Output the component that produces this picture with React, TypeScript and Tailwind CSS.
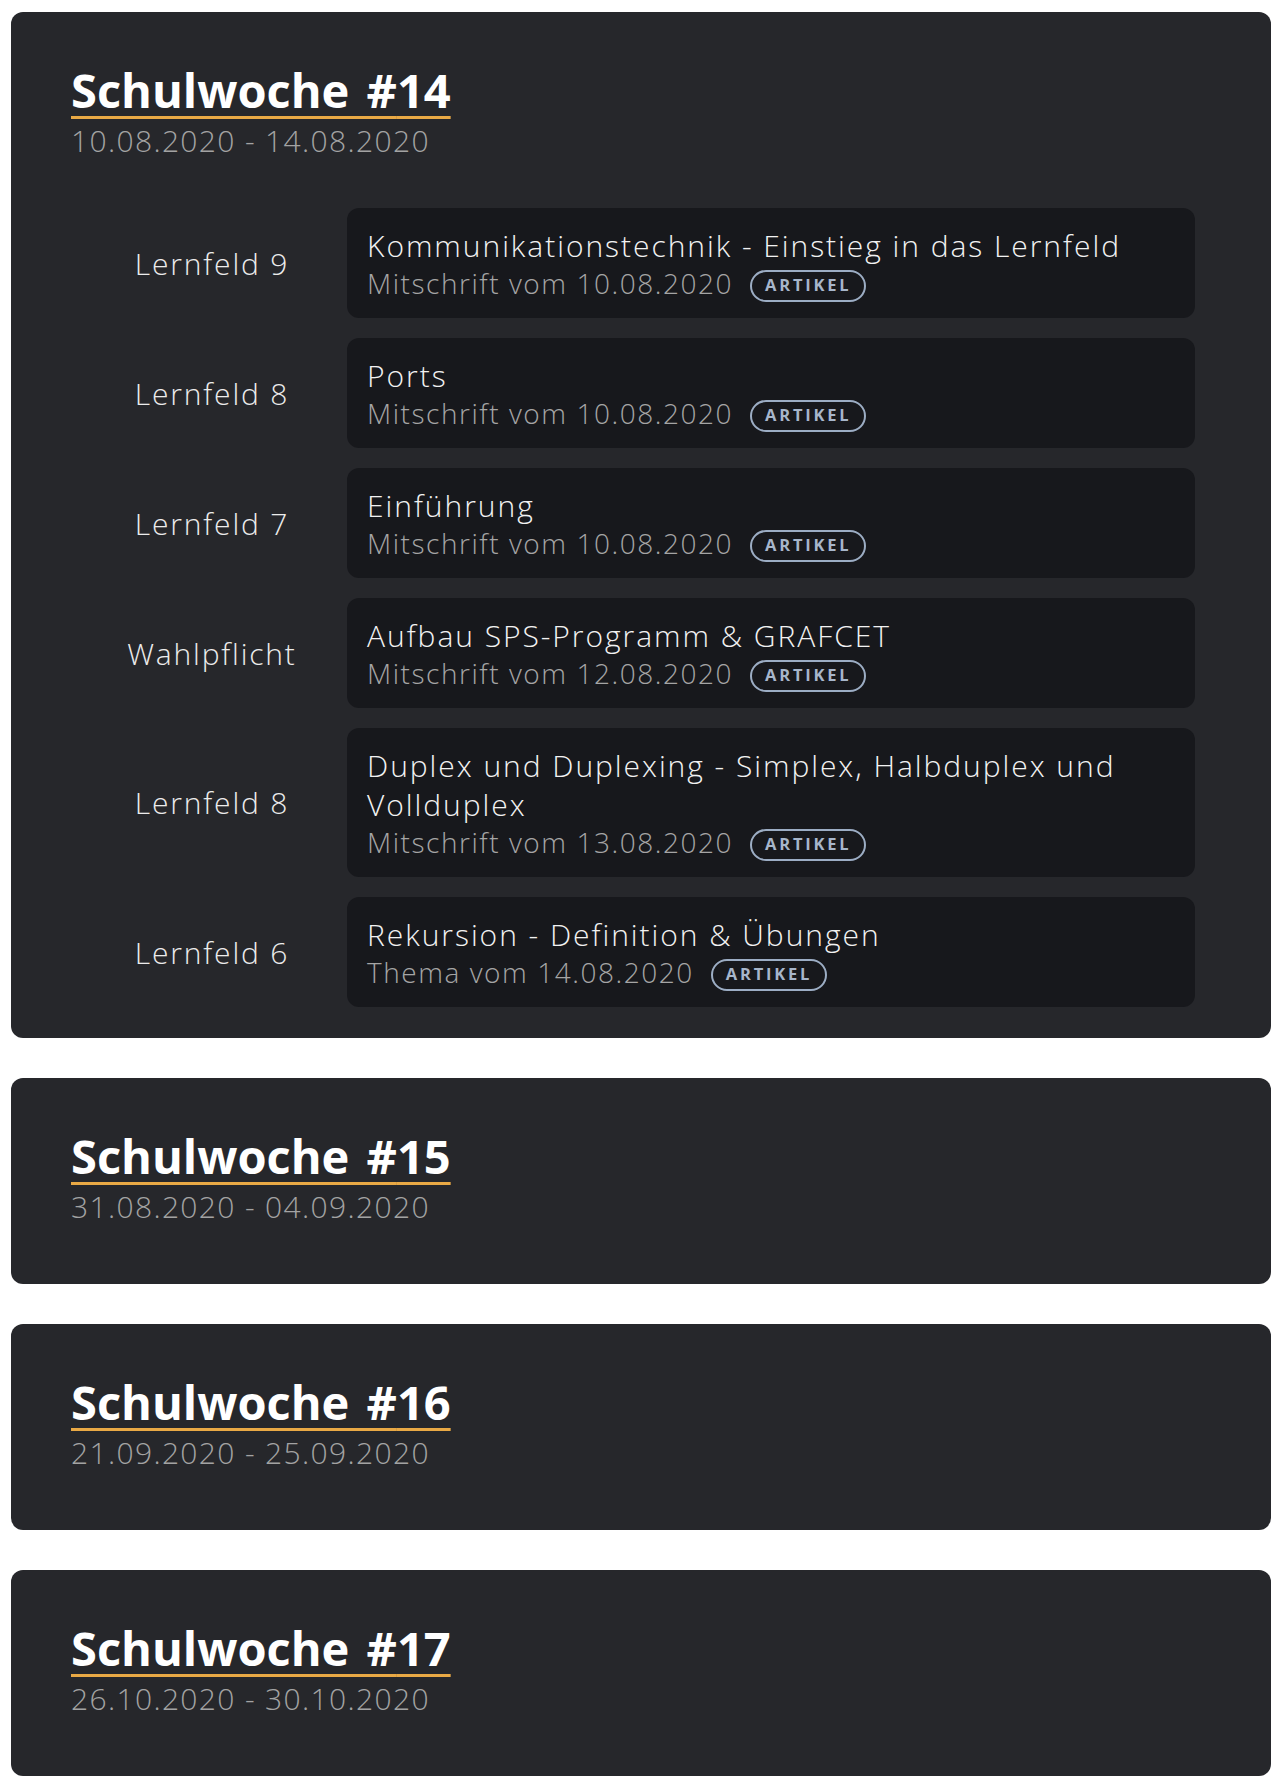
import React from 'react';

interface Entry {
  field: string;
  title: string;
  kind: string;
  date: string;
}

interface Week {
  no: number;
  range: string;
  entries: Entry[];
}

const WEEKS: Week[] = [
  {
    no: 14,
    range: '10.08.2020 - 14.08.2020',
    entries: [
      { field: 'Lernfeld 9', title: 'Kommunikationstechnik - Einstieg in das Lernfeld', kind: 'Mitschrift', date: '10.08.2020' },
      { field: 'Lernfeld 8', title: 'Ports', kind: 'Mitschrift', date: '10.08.2020' },
      { field: 'Lernfeld 7', title: 'Einführung', kind: 'Mitschrift', date: '10.08.2020' },
      { field: 'Wahlpflicht', title: 'Aufbau SPS-Programm & GRAFCET', kind: 'Mitschrift', date: '12.08.2020' },
      { field: 'Lernfeld 8', title: 'Duplex und Duplexing - Simplex, Halbduplex und Vollduplex', kind: 'Mitschrift', date: '13.08.2020' },
      { field: 'Lernfeld 6', title: 'Rekursion - Definition & Übungen', kind: 'Thema', date: '14.08.2020' },
    ],
  },
  { no: 15, range: '31.08.2020 - 04.09.2020', entries: [] },
  { no: 16, range: '21.09.2020 - 25.09.2020', entries: [] },
  { no: 17, range: '26.10.2020 - 30.10.2020', entries: [] },
];

const BODY = { fontFamily: '"Open Sans", Lato, sans-serif' };
const HEAD = { fontFamily: '"Open Sans", "Noto Sans", sans-serif' };

function Badge() {
  return (
    <span
      className="inline-flex items-center h-[32px] px-[13px] translate-y-[3px] rounded-full border-2 border-[#9cadc4] text-[#a7b6cb] text-[16.5px] font-bold tracking-[0.17em] leading-none"
      style={HEAD}
    >
      ARTIKEL
    </span>
  );
}

function EntryRow({ entry }: { entry: Entry }) {
  return (
    <div className="flex items-center">
      <div className="w-[276px] shrink-0 pl-[6px] text-center text-[30px] text-[#ececec] font-light tracking-[0.06em]" style={BODY}>
        {entry.field}
      </div>
      <div className="flex-1 min-w-0 rounded-xl bg-[#17181c] px-[20px] py-[18px]">
        <div className="text-[30px] leading-[39px] text-[#f2f2f2] font-light tracking-[0.065em] pr-[40px]" style={BODY}>
          {entry.title}
        </div>
        <div className="flex items-center gap-[17px] h-[35px]">
          <span className="text-[28px] text-[#a5a5a5] font-light tracking-[0.055em]" style={BODY}>
            {entry.kind} vom {entry.date}
          </span>
          <Badge />
        </div>
      </div>
    </div>
  );
}

function WeekCard({ week }: { week: Week }) {
  const hasEntries = week.entries.length > 0;
  return (
    <section
      className={`rounded-xl bg-[#26272b] pl-[60px] pr-[76px] pt-[52px] ${hasEntries ? 'pb-[31px]' : 'h-[206px]'}`}
    >
      <h2
        className="inline-block text-[47px] leading-[52px] font-bold text-white underline decoration-[#e9a945] decoration-[3px] underline-offset-[8px] [word-spacing:5px]"
        style={HEAD}
      >
        Schulwoche #{week.no}
      </h2>
      <div className="mt-[7px] text-[30px] leading-[36px] text-[#a3a3a3] font-light tracking-[0.045em]" style={BODY}>
        {week.range}
      </div>
      {hasEntries && (
        <div className="mt-[49px] flex flex-col gap-[20px]">
          {week.entries.map((e, i) => (
            <EntryRow key={i} entry={e} />
          ))}
        </div>
      )}
    </section>
  );
}

export default function App() {
  return (
    <div className="min-h-screen bg-white pl-[11px] pr-[14px] pt-[12px] pb-[16px]">
      <div className="flex flex-col gap-[40px]">
        {WEEKS.map((w) => (
          <WeekCard key={w.no} week={w} />
        ))}
      </div>
    </div>
  );
}
